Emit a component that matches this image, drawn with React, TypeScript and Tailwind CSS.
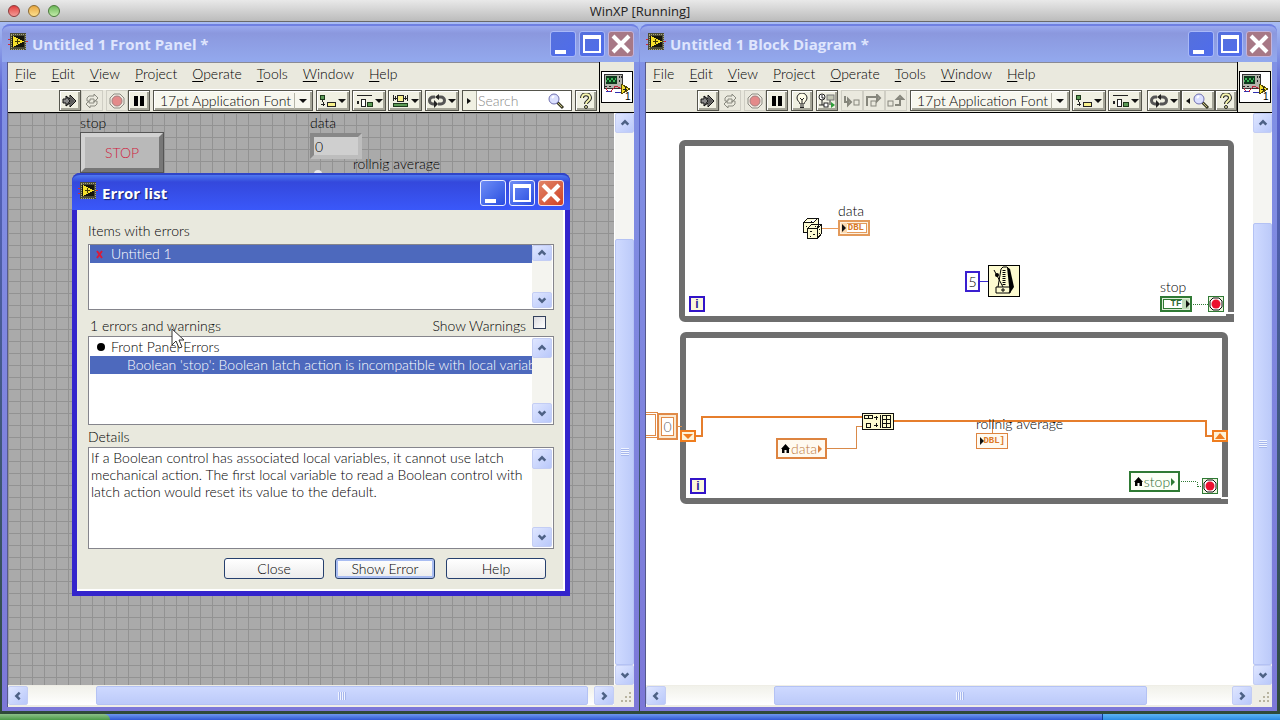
import type { ReactNode } from "react";

// ---------- toolbar glyphs ----------

const ChipIcon = () => (
  <svg width="20" height="18" viewBox="0 0 20 18" shapeRendering="crispEdges" className="mt-[7px] self-start">
    <path d="M0 6h3M0 11h3M17 8h3" stroke="#d2283c" strokeWidth="1" />
    <rect x="2" y="0" width="16" height="17" fill="#4a4a38" />
    <rect x="3" y="1" width="14" height="15" fill="none" stroke="#a9a57a" strokeDasharray="1 1" />
    <rect x="4" y="3" width="12" height="11" fill="#15150c" />
    <path d="M5 3l11 5.500-11 5.500z" fill="#f6e02c" />
    <path d="M7 8.500h5M9.500 6v5" stroke="#403800" />
  </svg>
);

const RunIcon = () => (
  <svg width="16" height="16" viewBox="0 0 16 16">
    <path d="M1 6h3V3l4 3V2l6 6-6 6v-4l-4 3v-3H1z" fill="#8a8a8a" stroke="#111" />
    <path d="M4 3l4 5-4 5" stroke="#111" fill="none" />
    <path d="M8 3v10l5-5z" fill="#5c5c5c" />
  </svg>
);

const RunLoopIcon = () => (
  <svg width="16" height="16" viewBox="0 0 16 16" fill="none" stroke="#8a8a80">
    <path d="M3 8V5l2-2h5V1l4 4-4 4V6H6v2zM13 8v3l-2 2H6v2l-4-4 3-3v2h5V8z" />
  </svg>
);

const AbortIcon = () => (
  <svg width="16" height="16" viewBox="0 0 16 16">
    <path d="M5 1h6l4 4v6l-4 4H5l-4-4V5z" fill="#eee9e0" stroke="#8d8d84" />
    <circle cx="8" cy="8" r="5" fill="#e48a8a" stroke="#a58080" />
  </svg>
);

const PauseIcon = () => (
  <svg width="12" height="12" viewBox="0 0 12 12" shapeRendering="crispEdges">
    <path d="M1 1h4v10H1zM7 1h4v10H7z" fill="#000" />
  </svg>
);

const BulbIcon = () => (
  <svg width="14" height="16" viewBox="0 0 14 16">
    <path d="M5 11c0-2-3-3-3-6a5 5 0 0 1 10 0c0 3-3 4-3 6z" fill="#fffde8" stroke="#222" />
    <path d="M5 5l2 2 2-2M7 7v4M5 13h4" stroke="#222" fill="none" />
    <path d="M5 14h4v1H5z" fill="#222" />
  </svg>
);

const RetainIcon = () => (
  <svg width="18" height="16" viewBox="0 0 18 16">
    <circle cx="4" cy="4" r="3" fill="#fff" stroke="#222" />
    <path d="M4 2v3h2M4 7v5M1 12h5M12 7v5M6 12h4" stroke="#222" fill="none" />
    <rect x="9" y="2" width="7" height="5" fill="#c3c7b4" stroke="#777" />
    <rect x="6" y="10" width="4" height="4" fill="#fff" stroke="#222" />
    <path d="M13 9l4 3-4 3z" fill="#2e9e3a" />
  </svg>
);

const StepIcon = ({ kind }: { kind: "into" | "over" | "out" }) => (
  <svg width="18" height="14" viewBox="0 0 18 14" fill="none" stroke="#86867c">
    {kind === "into" && <path d="M2 2v6h4M5 5l3 3-3 3z" strokeWidth="2" />}
    {kind === "over" && <path d="M2 12V3h11M12 1l3 3-3 3z" strokeWidth="2" />}
    {kind === "out" && <path d="M8 11h5V4M10 5l3-3 3 3z" strokeWidth="2" />}
    {kind === "into" && <rect x="11" y="6" width="5" height="5" />}
    {kind === "over" && <rect x="6" y="7" width="5" height="5" />}
    {kind === "out" && <rect x="1" y="7" width="5" height="5" />}
  </svg>
);

const AlignIcon = () => (
  <svg width="16" height="14" viewBox="0 0 16 14" shapeRendering="crispEdges">
    <rect x="0" y="1" width="4" height="4" fill="#5b9a55" stroke="#1d3a1b" />
    <path d="M2 6v2M1 10h4M3 8v4" stroke="#222" />
    <rect x="7" y="8" width="8" height="4" fill="#f7f08a" stroke="#222" />
  </svg>
);

const DistributeIcon = () => (
  <svg width="17" height="14" viewBox="0 0 17 14" shapeRendering="crispEdges">
    <path d="M1 2V1h14v1" stroke="#222" fill="none" />
    <rect x="1" y="7" width="2" height="3" fill="#222" />
    <rect x="5" y="5" width="4" height="7" fill="#fff" stroke="#222" />
    <rect x="11" y="8" width="5" height="4" fill="#5b9a55" stroke="#1d3a1b" />
  </svg>
);

const ResizeIcon = () => (
  <svg width="17" height="15" viewBox="0 0 17 15" shapeRendering="crispEdges">
    <path d="M1 2v6M15 2v6M1 5h4M11 5h4M3 3v4M13 3v4" stroke="#222" />
    <rect x="5" y="2" width="6" height="6" fill="#f7f08a" stroke="#222" />
    <rect x="1" y="10" width="14" height="3" fill="#5b9a55" stroke="#1d3a1b" />
  </svg>
);

const ReorderIcon = () => (
  <svg width="18" height="14" viewBox="0 0 18 14">
    <path d="M7 3H5a3 3 0 0 0 0 7h2M10 10h3a3 3 0 0 0 0-7h-3" fill="none" stroke="#555" strokeWidth="3" />
    <path d="M6 6l4 4-4 4zM11 0L7 3l4 3z" fill="#222" />
  </svg>
);

const LensIcon = () => (
  <svg width="18" height="18" viewBox="0 0 18 18">
    <path d="M10 10l6 6" stroke="#3c3c28" strokeWidth="3" />
    <path d="M11 11l4 4" stroke="#c5c07a" strokeWidth="1" />
    <circle cx="7" cy="7" r="5" fill="#dbe0ff" stroke="#7070b0" strokeWidth="1" />
    <path d="M5 6l2-2" stroke="#fff" strokeWidth="2" />
  </svg>
);

const HelpIcon = () => (
  <svg width="12" height="16" viewBox="0 0 12 16">
    <path d="M2 5c0-5 8-5 8 0 0 3-4 3-4 6" fill="none" stroke="#222" strokeWidth="4" />
    <path d="M2 5c0-5 8-5 8 0 0 3-4 3-4 6" fill="none" stroke="#f7f6b0" strokeWidth="2" />
    <circle cx="6" cy="14" r="1.500" fill="#f7f6b0" stroke="#222" />
  </svg>
);

const Caret = () => (
  <svg width="8" height="4" viewBox="0 0 8 4" className="shrink-0">
    <path d="M0 0h8L4 4z" fill="#111" />
  </svg>
);

const ViIcon = () => (
  <svg width="32" height="32" viewBox="0 0 32 32" shapeRendering="crispEdges">
    <rect x="0.500" y="0.500" width="31" height="31" fill="#fff" stroke="#000" />
    <rect x="3" y="3" width="18" height="14" fill="#b4b4ac" stroke="#333" />
    <rect x="5" y="5" width="11" height="8" fill="#0d3b1c" />
    <path d="M5 11l2-4 2 4 2-4 2 4 2-4" stroke="#3ab355" fill="none" />
    <path d="M18 5v2M18 9v2M20 5v2M4 15h2M8 15h2" stroke="#222" />
    <path d="M5 17c2 5 5 5 7 1s5-3 8 0" stroke="#c3203c" fill="none" />
    <path d="M5 20h5M14 21h6" stroke="#3030b0" />
    <path d="M20 13l9 5-9 5z" fill="#f6e02c" stroke="#554a00" />
    <path d="M22 18h4M24 16v4" stroke="#222" />
    <text x="24" y="29" fontSize="10" fontFamily="Liberation Sans, sans-serif" fill="#000">1</text>
  </svg>
);

// ---------- window chrome ----------

const chevrons = {
  up: "M2 8l4-4 4 4",
  down: "M2 4l4 4 4-4",
  left: "M8 2L4 6l4 4",
  right: "M4 2l4 4-4 4",
};

type Dir = keyof typeof chevrons;

const ScrollButton = ({ dir, className }: { dir: Dir; className: string }) => (
  <button
    type="button"
    aria-label={`Scroll ${dir}`}
    className={`flex shrink-0 items-center justify-center rounded-xs border border-[#c3cdf4] bg-gradient-to-br from-[#dfe6ff] to-[#b9c8fa] ${className}`}
  >
    <svg width="10" height="10" viewBox="0 0 12 12">
      <path d={chevrons[dir]} fill="none" stroke="#4d6185" strokeWidth="3" />
    </svg>
  </button>
);

const VScroll = ({ start, end }: { start: number; end: number }) => (
  <div className="flex w-5 shrink-0 flex-col border-l border-white bg-[#f5f5f2]">
    <ScrollButton dir="up" className="h-5" />
    <div className="relative flex-1">
      <div
        className="absolute inset-x-0 flex items-center justify-center rounded-xs border border-[#b4c2f4] bg-gradient-to-r from-[#cfdaff] to-[#bccaf9]"
        style={{ top: `${start}%`, bottom: `${100 - end}%` }}
      >
        <div className="h-2 w-2 bg-[repeating-linear-gradient(#f0f4ff_0_1px,#a6b6ec_1px_2px)]" />
      </div>
    </div>
    <ScrollButton dir="down" className="h-5" />
  </div>
);

const HScroll = ({ start, end }: { start: number; end: number }) => (
  <div className="flex h-[22px] shrink-0 bg-[#efeee6] pt-px pb-0.5">
    <div className="flex flex-1 bg-gradient-to-b from-[#f1f1ea] to-white">
      <ScrollButton dir="left" className="w-5" />
      <div className="relative flex-1">
        <div
          className="absolute inset-y-0 flex items-center justify-center rounded-xs border border-[#b4c2f4] bg-gradient-to-b from-[#ced9ff] to-[#bccaf9]"
          style={{ left: `${start}%`, right: `${100 - end}%` }}
        >
          <div className="h-2 w-2 bg-[repeating-linear-gradient(90deg,#f0f4ff_0_1px,#a6b6ec_1px_2px)]" />
        </div>
      </div>
      <ScrollButton dir="right" className="w-5" />
    </div>
    <div className="flex w-5 items-end justify-end p-0.5">
      <svg width="12" height="12" viewBox="0 0 12 12" fill="#b8b4a0">
        <path d="M9 1h2v2H9zM5 5h2v2H5zM9 5h2v2H9zM1 9h2v2H1zM5 9h2v2H5zM9 9h2v2H9z" />
      </svg>
    </div>
  </div>
);

const CaptionButtons = ({ active }: { active?: boolean }) => {
  const blue = active
    ? "border-[#e8ecff] bg-gradient-to-br from-[#6f8cf5] to-[#2a4be0]"
    : "border-[#a9b9f8] bg-gradient-to-br from-[#5570dc] to-[#4f6cec]";
  const red = active
    ? "border-[#f5dfe0] bg-gradient-to-br from-[#e08468] to-[#cf3f22]"
    : "border-[#c3b4dc] bg-[#a77886]";
  return (
    <div className="flex gap-[3px]">
      <button type="button" aria-label="Minimize" className={`size-[26px] rounded-[3px] border ${blue}`}>
        <svg width="24" height="24" viewBox="0 0 24 24">
          <path d="M4 18h11v4H4z" fill="#fff" />
        </svg>
      </button>
      <button type="button" aria-label="Maximize" className={`size-[26px] rounded-[3px] border ${blue}`}>
        <svg width="24" height="24" viewBox="0 0 24 24">
          <path d="M3 3h18v18H3zM5 7v12h14V7z" fill="#fff" fillRule="evenodd" />
        </svg>
      </button>
      <button type="button" aria-label="Close" className={`size-[26px] rounded-[3px] border ${red}`}>
        <svg width="24" height="24" viewBox="0 0 24 24">
          <path d="M4 4l16 16M20 4L4 20" stroke="#fff" strokeWidth="4" />
        </svg>
      </button>
    </div>
  );
};

const menus = ["File", "Edit", "View", "Project", "Operate", "Tools", "Window", "Help"];

const MenuBar = () => (
  <nav className="flex h-[26px] items-center gap-[15px] pb-1 pl-[7px]">
    {menus.map((name) => (
      <button type="button" key={name}>
        <span className="underline underline-offset-2">{name[0]}</span>
        {name.slice(1)}
      </button>
    ))}
  </nav>
);

const Tool = ({ label, ghost, wide, children }: { label: string; ghost?: boolean; wide?: boolean; children: ReactNode }) => (
  <button
    type="button"
    aria-label={label}
    className={`flex h-[21px] shrink-0 items-center justify-center gap-0.5 border ${wide ? "w-[34px]" : "w-[22px]"} ${
      ghost ? "border-[#cfcec4]" : "border-[#55554c] bg-[#f0f0e2] shadow-[inset_1px_1px_0_#fff,inset_-2px_-2px_0_#a5a598]"
    }`}
  >
    {children}
  </button>
);

const FontPicker = ({ id }: { id: string }) => (
  <label htmlFor={id} className="relative flex h-[21px] w-40 shrink-0 border border-[#55554c] bg-[#f7f7ee] shadow-[inset_1px_1px_0_#fff,inset_-2px_-2px_0_#a5a598]">
    <select id={id} aria-label="Text settings" className="w-full appearance-none pl-1.5 leading-[19px]">
      <option>17pt Application Font</option>
    </select>
    <span className="pointer-events-none absolute top-0.5 right-0.5 flex h-4 w-4 items-center justify-center border-l border-[#b5b5a8]">
      <Caret />
    </span>
  </label>
);

type FrameProps = { title: string; tools: ReactNode; children: ReactNode; hThumb: [number, number]; vThumb: [number, number] };

const Frame = ({ title, tools, children, hThumb, vThumb }: FrameProps) => (
  <section className="flex min-w-0 flex-1 flex-col rounded-t-lg border-b-4 border-[#7c78d8] bg-gradient-to-b from-[#8193e6] to-[#7c78d8] px-[5px]">
    <header className="-mx-[5px] flex h-[38px] shrink-0 items-center rounded-t-lg border-t-2 border-[#6f80e2] bg-gradient-to-b from-[#9aa9f0] via-[#8b98de] via-20% to-[#93a9ee] pr-[5px] pl-[6px]">
      <ChipIcon />
      <h1 className="ml-1 flex-1 font-['Open_Sans','Noto_Sans',sans-serif] text-[15px] font-bold text-[#dfe5fd]">{title}</h1>
      <CaptionButtons />
    </header>
    <div className="flex min-h-0 flex-1 flex-col border-l border-[#55598c] bg-white">
      <div className="flex h-[51px] shrink-0 border-b border-black bg-[#eae9de]">
        <div className="flex min-w-0 flex-1 flex-col border-t border-[#8a8a94]">
          <MenuBar />
          <div className="flex h-6 items-center border-t border-white">{tools}</div>
        </div>
        <div className="flex shrink-0 border-l border-black pt-[9px] pr-px pl-px">
          <ViIcon />
        </div>
      </div>
      <div className="flex min-h-0 flex-1">
        {children}
        <VScroll start={vThumb[0]} end={vThumb[1]} />
      </div>
      <HScroll start={hThumb[0]} end={hThumb[1]} />
    </div>
  </section>
);

// ---------- front panel ----------

const FrontPanel = () => (
  <div className="relative flex-1 overflow-hidden bg-[#aaaaaa] bg-[linear-gradient(#929292_1px,transparent_1px),linear-gradient(90deg,#929292_1px,transparent_1px)] bg-size-[12px_12px]">
    <span className="absolute top-0 left-[72px] leading-5">stop</span>
    <button
      type="button"
      className="absolute top-[20px] left-[73px] h-[39px] w-[82px] border-4 border-t-[#d2d2d2] border-r-[#777] border-b-[#777] border-l-[#d2d2d2] bg-[#b9b9b9] text-[#d01c40] outline outline-[#555]"
    >
      STOP
    </button>
    <label htmlFor="data" className="absolute top-0 left-[302px] leading-5">data</label>
    <input
      id="data"
      defaultValue="0"
      className="absolute top-5 left-[302px] h-[26px] w-[52px] border-4 border-t-[#888] border-r-[#bdbdbd] border-b-[#bdbdbd] border-l-[#888] bg-[#cfcfcf] pl-px"
    />
    <span className="absolute top-[41px] left-[345px] leading-5">rollnig average</span>
    <span className="absolute top-[57px] left-[306px] size-2 rounded-full bg-[#e8e8e8]" />
  </div>
);

// ---------- block diagram ----------

const StopTerminal = ({ className }: { className: string }) => (
  <svg width="16" height="16" viewBox="0 0 16 16" className={`absolute ${className}`}>
    <rect x="0.500" y="0.500" width="15" height="15" fill="#e9f5dc" stroke="#2f7a34" />
    <path d="M5 2h6l3 3v6l-3 3H5l-3-3V5z" fill="#fff" stroke="#111" />
    <circle cx="8" cy="8" r="4.500" fill="#ec1130" />
  </svg>
);

const Iteration = ({ className }: { className: string }) => (
  <span className={`absolute flex size-4 items-center justify-center border-2 border-[#3214c8] bg-[#fbf7da] font-['Liberation_Sans',sans-serif] text-xs font-bold text-[#2a1a9a] ${className}`}>
    i
  </span>
);

const ShiftRegister = ({ up, className }: { up?: boolean; className: string }) => (
  <svg width="16" height="12" viewBox="0 0 16 12" className={`absolute ${className}`}>
    <rect x="1" y="1" width="14" height="10" fill="#fdf3d8" stroke="#ef7d1e" strokeWidth="2" />
    <path d={up ? "M3 9h10L8 3z" : "M3 4h10l-5 5z"} fill="#ef7d1e" />
  </svg>
);

const House = () => (
  <svg width="9" height="10" viewBox="0 0 9 10">
    <path d="M4.500 0L9 5H8v4H5.500V6h-2v3H1V5H0z" fill="#000" />
  </svg>
);

const BlockDiagram = () => (
  <div className="relative flex-1 overflow-hidden bg-white">
    {/* while loops */}
    <div className="absolute top-[27px] left-[33px] h-[182px] w-[555px] rounded-md border-6 border-[#6e6e6e]" />
    <div className="absolute top-[219px] left-[34px] h-[172px] w-[548px] rounded-md border-6 border-[#6e6e6e]" />

    {/* wires */}
    <svg width="606" height="571" viewBox="0 0 606 571" className="absolute top-0 left-0" fill="none" shapeRendering="crispEdges">
      <path d="M581 199h7v2h-7zM575 384h7v2h-7z" fill="#fff" />
      <path d="M580 201h8v8h-8zM574 386h8v5h-8z" fill="#6e6e6e" />
      <path d="M176 115.500h16" stroke="#ea9a5a" />
      <path d="M334 168.500h8" stroke="#3a2ad0" />
      <path d="M547 191.500h15M535 368.500h16v5h5" stroke="#2f7a34" strokeDasharray="1 1" />
      <path d="M50 323h6v-19h160M248 308h312v15h6" stroke="#e67e2c" strokeWidth="2" />
      <path d="M32 313.500h4M181 335.500h29v-22h6M346.500 309v11" stroke="#d98a4a" />
    </svg>

    <svg width="20" height="22" viewBox="0 0 20 22" className="absolute top-[105px] left-[157px]" fill="#fdfbd2" stroke="#111" shapeRendering="crispEdges">
      <path d="M0.500 4.500l4-4h10.500v8l-4 6H0.500zM0.500 4.500h10l4-4" />
      <path d="M4.500 10.500l4-4h10v9l-4 5h-10zM4.500 10.500h10l4-4M14.500 10.500v10" />
      <path d="M7 13.500h2M10 16.500h2M7 18.500h1M12 8.500h1M16 11.500h1M16 15.500h1M3 8.500h1M8 3.500h1" />
    </svg>
    <span className="absolute top-[88px] left-[192px] leading-5">data</span>
    <svg width="32" height="16" viewBox="0 0 32 16" className="absolute top-[107px] left-[192px]">
      <rect x="1" y="1" width="30" height="14" fill="#fdf1e0" stroke="#e39a5b" strokeWidth="2" />
      <rect x="3.500" y="3.500" width="25" height="9" fill="#fff" stroke="#e39a5b" />
      <path d="M3 3h6v10H3z" fill="#fbd9b0" />
      <path d="M4 4l4 4-4 4z" fill="#111" />
    </svg>
    <span className="absolute top-[107px] left-[192px] flex h-4 w-8 items-center justify-end pr-1.5 font-['Liberation_Mono',monospace] text-[9px] leading-4 font-bold text-[#d87a28]">
      DBL
    </span>

    <span className="absolute top-[158px] left-[319px] flex h-[21px] w-[15px] items-center justify-center border-2 border-[#3a1fd0] bg-white">5</span>
    <svg width="32" height="32" viewBox="0 0 32 32" className="absolute top-[152px] left-[342px]">
      <rect x="0.500" y="0.500" width="31" height="31" fill="#fdfbd0" stroke="#000" />
      <path d="M10 22l3-18 2-2h4l2 2 3 18-3 6" fill="#fdfbd0" stroke="#000" />
      <path d="M19 2l3 2 4 18-4 6-1-7z" fill="#000" />
      <path d="M8 22h14v6H8zM6 5l9 17" fill="none" stroke="#000" />
      <path d="M16 5v16" stroke="#000" strokeWidth="3" strokeDasharray="1 1" />
      <circle cx="9" cy="10" r="2" fill="#000" />
      <path d="M15 23v4M13 25h4" stroke="#000" />
    </svg>

    <span className="absolute top-[164px] left-[514px] leading-5">stop</span>
    <svg width="32" height="16" viewBox="0 0 32 16" className="absolute top-[183px] left-[514px]">
      <rect x="1" y="1" width="30" height="14" fill="#dfeeda" stroke="#2f7a34" strokeWidth="2" />
      <rect x="3.500" y="3.500" width="25" height="9" fill="#fff" stroke="#2f7a34" />
      <path d="M22 3h7v10h-7z" fill="#bfd9b8" />
      <path d="M26 4l4 4-4 4z" fill="#111" />
    </svg>
    <span className="absolute top-[183px] left-[514px] flex h-4 w-8 items-center justify-center font-['Liberation_Mono',monospace] text-[9px] leading-4 font-bold text-[#2f6a34]">
      TF
    </span>
    <StopTerminal className="top-[183px] left-[562px]" />
    <Iteration className="top-[183px] left-[43px]" />

    {/* averaging loop */}
    <span className="absolute top-[301px] -left-3 h-[22px] w-[22px] border border-[#e08a48] bg-white outline outline-offset-1 outline-[#e08a48]" />
    <span className="absolute top-[300px] left-[11px] flex h-[27px] w-[21px] items-center justify-center border-2 border-[#e08a48] bg-white text-[#666] shadow-[inset_0_0_0_2px_#fbe9d2,inset_0_0_0_3px_#e08a48]">
      0
    </span>
    <ShiftRegister className="top-[317px] left-[34px]" />
    <ShiftRegister up className="top-[317px] left-[566px]" />
    <Iteration className="top-[365px] left-[44px]" />

    <svg width="32" height="17" viewBox="0 0 32 17" className="absolute top-[300px] left-[216px]" shapeRendering="crispEdges" fill="none" stroke="#111">
      <rect x="0.500" y="0.500" width="31" height="16" fill="#fdfbd0" />
      <path d="M2.500 2.500h8v3h-8zM6.500 2.500v3M4.500 10.500h4v4h-4z" />
      <path d="M12 4.500h4M14.500 3v4M12 12.500h4M14.500 10v4M18.500 2v13" />
      <path d="M20.500 2.500h8v12h-8zM24.500 2.500v12M20.500 6.500h8M20.500 10.500h8" />
    </svg>

    <span className="absolute top-[325px] left-[130px] flex h-[21px] w-[51px] items-center justify-center gap-px border-2 border-[#dd8440] bg-[#fffaf0] text-[#c07c40]">
      <House />
      data
      <svg width="4" height="8" viewBox="0 0 4 8"><path d="M0 0l4 4-4 4z" fill="#dd8440" /></svg>
    </span>

    <span className="absolute top-[301px] left-[330px] leading-5 whitespace-nowrap">rollnig average</span>
    <span className="absolute top-[320px] left-[330px] flex h-4 w-8 items-center justify-end border border-[#dd8440] bg-[#fffaf0] pr-0.5 font-['Liberation_Mono',monospace] text-[9px] leading-4 font-bold text-[#dd7a28]">
      DBL]
    </span>
    <svg width="8" height="8" viewBox="0 0 8 8" className="absolute top-[324px] left-[333px]">
      <path d="M1 0l4 4-4 4z" fill="#111" />
    </svg>

    <span className="absolute top-[358px] left-[483px] flex h-[21px] w-[51px] items-center justify-center gap-px border-2 border-[#2f7a34] bg-[#fbfff6] text-[#2f6a34]">
      <House />
      stop
      <svg width="4" height="8" viewBox="0 0 4 8"><path d="M0 0l4 4-4 4z" fill="#2f7a34" /></svg>
    </span>
    <StopTerminal className="top-[365px] left-[556px]" />
  </div>
);

// ---------- error list dialog ----------

const ListScroll = ({ small }: { small?: boolean }) => (
  <div className="flex w-5 shrink-0 flex-col justify-between bg-[#f4f4ef]">
    <ScrollButton dir="up" className={small ? "h-4" : "h-5"} />
    <ScrollButton dir="down" className={small ? "h-4" : "h-5"} />
  </div>
);

const dialogButton =
  "h-[21px] w-[100px] rounded-[3px] border border-[#26406e] bg-gradient-to-b from-white to-[#ececec]";

const ErrorDialog = () => (
  <div
    role="dialog"
    aria-labelledby="error-title"
    className="absolute top-[173px] left-[72px] flex w-[498px] flex-col rounded-t-lg bg-[#3324cc] px-[5px] pb-[5px]"
  >
    <header className="-mx-[5px] flex h-[37px] items-center rounded-t-lg border-t-2 border-[#2f45c8] bg-gradient-to-b from-[#5078f0] via-[#3448dc] via-20% to-[#3a58fa] pr-[6px] pl-[6px]">
      <ChipIcon />
      <h2 id="error-title" className="ml-1 flex-1 font-['Open_Sans','Noto_Sans',sans-serif] text-[15px] font-bold text-white [text-shadow:1px_1px_1px_#142070]">
        Error list
      </h2>
      <CaptionButtons active />
    </header>
    <div className="flex flex-col border-r-2 border-b-2 border-white bg-[#e9e9de] pt-[11px] pr-[9px] pb-2.5 pl-[11px]">
      <p className="mb-[3px] h-5 leading-5">Items with errors</p>
      <div className="flex h-[66px] border border-[#85858c] bg-white px-px pb-px">
        <div className="min-w-0 flex-1">
          <div className="flex h-[18px] items-center bg-[#4d69bd] pl-1.5 text-white">
            <svg width="8" height="9" viewBox="0 0 8 9"><path d="M1 1l5 7M6 1L1 8" stroke="#d81c3a" strokeWidth="2" /></svg>
            <span className="ml-[7px]">Untitled 1</span>
          </div>
        </div>
        <ListScroll small />
      </div>
      <div className="mt-1.5 flex h-5 justify-between pl-0.5">
        <p className="leading-5">1 errors and warnings</p>
        <div className="flex items-start gap-[7px] pr-2">
          <label htmlFor="show-warnings" className="leading-5">Show Warnings</label>
          <input id="show-warnings" type="checkbox" className="size-[13px] appearance-none border border-[#33405c] bg-gradient-to-br from-[#dcdce0] to-white" />
        </div>
      </div>
      <div className="flex h-[89px] border border-[#85858c] bg-white p-px">
        <div className="min-w-0 flex-1">
          <div className="flex h-[18px] items-center pl-[7px]">
            <span className="size-2 rounded-full bg-black" />
            <span className="ml-1.5">Front Panel Errors</span>
          </div>
          <div className="h-[18px] overflow-hidden bg-[#4d69bd] pl-[37px] leading-[18px] whitespace-nowrap text-white">
            Boolean 'stop': Boolean latch action is incompatible with local variable
          </div>
        </div>
        <ListScroll />
      </div>
      <label htmlFor="details" className="mt-0.5 h-5 leading-5">Details</label>
      <div className="flex h-[102px] border border-[#85858c] bg-white p-px">
        <textarea
          id="details"
          readOnly
          className="min-w-0 flex-1 resize-none overflow-hidden pl-px leading-[17px]"
          defaultValue="If a Boolean control has associated local variables, it cannot use latch mechanical action. The first local variable to read a Boolean control with latch action would reset its value to the default."
        />
        <ListScroll />
      </div>
      <div className="mt-[9px] flex justify-end gap-[11px] pr-2">
        <button type="button" className={dialogButton}>Close</button>
        <button type="button" className={`${dialogButton} shadow-[inset_0_0_0_2px_#a9bdf2]`}>Show Error</button>
        <button type="button" className={dialogButton}>Help</button>
      </div>
    </div>

    {/* mouse pointer */}
    <svg width="14" height="22" viewBox="0 0 14 22" className="absolute top-[155px] left-[99px]">
      <path d="M1 1v16l4-4 3 7 3-1-3-7h5z" fill="#fff" stroke="#333" />
    </svg>
  </div>
);

// ---------- desktop ----------

const RunTools = () => (
  <>
    <div className="flex"><Tool label="Run"><RunIcon /></Tool><Tool label="Run continuously" ghost><RunLoopIcon /></Tool></div>
    <div className="flex"><Tool label="Abort" ghost><AbortIcon /></Tool><Tool label="Pause"><PauseIcon /></Tool></div>
  </>
);

const frontTools = (
  <div className="flex gap-[3px] pl-[51px]">
    <RunTools />
    <FontPicker id="front-font" />
    <div className="flex gap-0.5">
      <Tool wide label="Align objects"><AlignIcon /><Caret /></Tool>
      <Tool wide label="Distribute objects"><DistributeIcon /><Caret /></Tool>
      <Tool wide label="Resize objects"><ResizeIcon /><Caret /></Tool>
    </div>
    <Tool wide label="Reorder"><ReorderIcon /><Caret /></Tool>
    <div className="flex h-[21px] w-[110px] border border-[#55554c] bg-white">
      <span className="flex w-[14px] shrink-0 items-center border-r border-[#a5a598] bg-[#f0f0e2] pl-1">
        <svg width="4" height="6" viewBox="0 0 4 6"><path d="M0 0l4 3-4 3z" fill="#111" /></svg>
      </span>
      <input aria-label="Search" placeholder="Search" className="w-0 flex-1 pl-px placeholder:text-[#8a8a8a]" />
      <span className="flex w-6 items-center"><LensIcon /></span>
    </div>
    <Tool label="Context help"><HelpIcon /></Tool>
  </div>
);

const diagramTools = (
  <div className="flex gap-[3px] pl-[51px]">
    <RunTools />
    <Tool label="Highlight execution"><BulbIcon /></Tool>
    <Tool label="Retain wire values"><RetainIcon /></Tool>
    <div className="flex">
      <Tool ghost label="Step into"><StepIcon kind="into" /></Tool>
      <Tool ghost label="Step over"><StepIcon kind="over" /></Tool>
      <Tool ghost label="Step out"><StepIcon kind="out" /></Tool>
    </div>
    <div className="flex gap-0.5">
      <FontPicker id="diagram-font" />
      <Tool wide label="Align objects"><AlignIcon /><Caret /></Tool>
      <Tool wide label="Distribute objects"><DistributeIcon /><Caret /></Tool>
    </div>
    <div className="flex pl-0.5">
      <Tool wide label="Reorder"><ReorderIcon /><Caret /></Tool>
      <Tool wide label="Search">
        <svg width="4" height="6" viewBox="0 0 4 6"><path d="M4 0L0 3l4 3z" fill="#111" /></svg>
        <LensIcon />
      </Tool>
      <Tool label="Context help"><HelpIcon /></Tool>
    </div>
  </div>
);

const App = () => (
  <div className="relative flex h-screen w-full flex-col overflow-hidden bg-[#2f4a3a] font-['Lato','Open_Sans',sans-serif] text-[14px] leading-5 font-light text-black">
    <div className="relative flex h-[22px] shrink-0 items-center justify-center border-b border-[#6a6a6a] bg-gradient-to-b from-[#e9e9e9] to-[#bcbcbc]">
      <div className="absolute top-[5px] left-2 flex gap-2">
        <button type="button" aria-label="Close machine" className="size-3 rounded-full border border-[#8c3a3a] bg-gradient-to-b from-[#e0383c] to-[#f29a98]" />
        <button type="button" aria-label="Minimize machine" className="size-3 rounded-full border border-[#8c6a30] bg-gradient-to-b from-[#e8a63c] to-[#fbe08e]" />
        <button type="button" aria-label="Zoom machine" className="size-3 rounded-full border border-[#4a7a3a] bg-gradient-to-b from-[#6cb858] to-[#c2ecaa]" />
      </div>
      <span className="font-['Open_Sans','Noto_Sans',sans-serif] text-[13px] font-normal text-[#222]">WinXP [Running]</span>
    </div>
    <main className="flex min-h-0 flex-1 gap-px bg-gradient-to-b from-[#a9bdf4] via-[#5b62d0] via-10% to-[#2f4a3a] pt-0.5 pr-[3px] pb-[3px] pl-0.5">
      <Frame title="Untitled 1 Front Panel *" tools={frontTools} hThumb={[12, 99]} vThumb={[20, 100]}>
        <FrontPanel />
      </Frame>
      <Frame title="Untitled 1 Block Diagram *" tools={diagramTools} hThumb={[19, 85]} vThumb={[17, 100]}>
        <BlockDiagram />
      </Frame>
    </main>
    <footer className="flex h-1.5 shrink-0 bg-gradient-to-b from-[#6f97f0] to-[#3158d4]">
      <div className="w-[110px] rounded-tr-md bg-gradient-to-b from-[#8cc088] to-[#4a9a48]" />
      <div className="ml-auto w-[178px] border-l border-[#123c8c] bg-gradient-to-b from-[#5cb4f4] to-[#2a8ce4]" />
    </footer>
    <ErrorDialog />
  </div>
);

export default App;
